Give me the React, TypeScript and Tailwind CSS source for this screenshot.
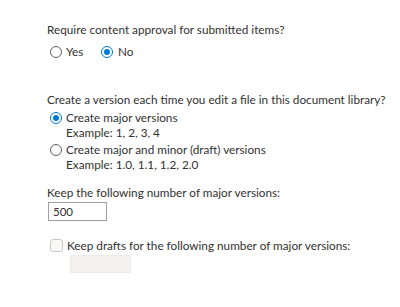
import React from "react";

function Radio({ checked }: { checked?: boolean }) {
  return (
    <span
      className={
        "flex h-[12px] w-[12px] shrink-0 items-center justify-center rounded-full border " +
        (checked ? "border-[#0078d4]" : "border-[#605e5c]")
      }
    >
      {checked && <span className="h-[6px] w-[6px] rounded-full bg-[#0078d4]" />}
    </span>
  );
}

export default function App() {
  return (
    <div
      className="h-[307px] w-[400px] whitespace-nowrap bg-white pl-[47px] pt-[22px] text-[11.75px] leading-[15px] text-[#323130]"
      style={{ fontFamily: 'Lato, "Noto Sans", sans-serif' }}
    >
      <div>Require content approval for submitted items?</div>
      <div className="mt-[7px] flex items-center pl-[3px]">
        <Radio />
        <span className="ml-[4px] w-[35px]">Yes</span>
        <Radio checked />
        <span className="ml-[5px]">No</span>
      </div>

      <div className="mt-[33px]">Create a version each time you edit a file in this document library?</div>
      <div className="mt-[3px] flex items-center pl-[3px]">
        <Radio checked />
        <span className="ml-[4px]">Create major versions</span>
      </div>
      <div className="pl-[19px]">Example: 1, 2, 3, 4</div>
      <div className="mt-[2px] flex items-center pl-[3px]">
        <Radio />
        <span className="ml-[4px]">Create major and minor (draft) versions</span>
      </div>
      <div className="pl-[19px]">Example: 1.0, 1.1, 1.2, 2.0</div>

      <div className="mt-[13px]">Keep the following number of major versions:</div>
      <input
        defaultValue="500"
        className="ml-[1px] mt-[2px] block h-[19px] w-[59px] border border-[#a19f9d] px-[4px] text-[11.5px] text-[#323130] outline-none"
      />

      <label className="mt-[17px] flex items-center pl-[3px]">
        <span className="h-[13px] w-[13px] rounded-[3px] border border-[#c8c6c4] bg-[#faf9f8]" />
        <span className="ml-[4px]">Keep drafts for the following number of major versions:</span>
      </label>
      <div className="ml-[23px] mt-[2px] h-[18px] w-[61px] border border-[#edebe9] bg-[#f3f2f1]" />
    </div>
  );
}
